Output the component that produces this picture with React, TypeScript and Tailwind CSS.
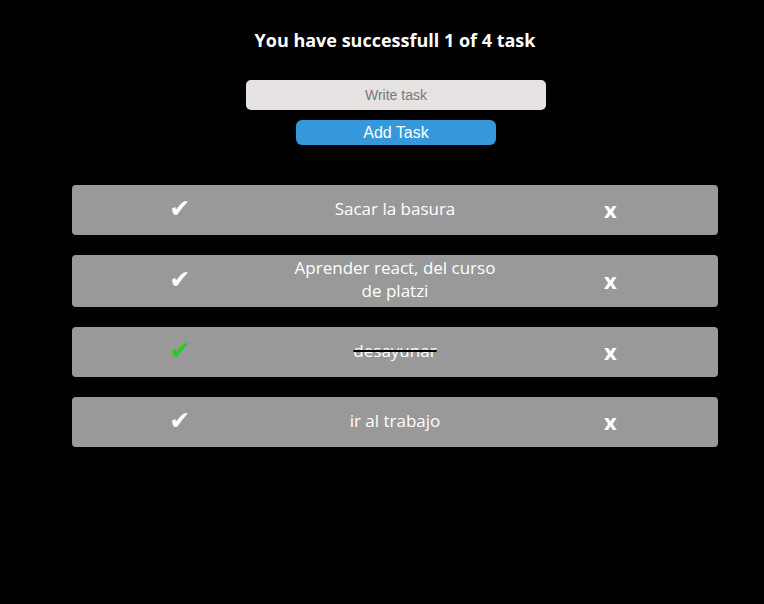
const tasks = [
  { text: 'Sacar la basura', done: false },
  { text: 'Aprender react, del curso de platzi', done: false },
  { text: 'desayunar', done: true },
  { text: 'ir al trabajo', done: false },
];

export default function App() {
  const completed = tasks.filter((t) => t.done).length;
  return (
    <div className="min-h-[604px] bg-black font-['Open_Sans',sans-serif] text-white">
      <div className="ml-[72px] w-[646px]">
        <h1 className="pt-[28px] text-center text-[18px] font-bold leading-[24px]">
          You have successfull {completed} of {tasks.length} task
        </h1>

        <div className="mt-[28px] flex flex-col items-center pl-[2px]">
          <input
            placeholder="Write task"
            className="h-[30px] w-[300px] rounded-[5px] bg-[#e6e2e2] text-center font-['Liberation_Sans',sans-serif] text-[14px] text-black placeholder:text-[#777] outline-none"
          />
          <button className="mt-[10px] h-[25px] w-[200px] rounded-[6px] bg-[#3498db] font-['Liberation_Sans',sans-serif] text-[16px] leading-[25px] text-white">
            Add Task
          </button>
        </div>

        <ul className="mt-[40px] flex flex-col gap-[20px]">
          {tasks.map((task) => (
            <li
              key={task.text}
              className="grid min-h-[50px] grid-cols-3 items-center rounded-[4px] bg-[#999999] pt-[1px] pb-[5px] text-center"
            >
              <span
                className={`text-[25px] leading-none font-['DejaVu_Sans',sans-serif] ${
                  task.done ? 'text-[#22cc22]' : 'text-white'
                }`}
              >
                ✔
              </span>
              <p
                className={`text-[17px] leading-[23px] ${
                  task.done ? 'line-through decoration-black decoration-2' : ''
                }`}
              >
                {task.text}
              </p>
              <span className="pt-[2px] text-[22px] leading-none font-bold">x</span>
            </li>
          ))}
        </ul>
      </div>
    </div>
  );
}
